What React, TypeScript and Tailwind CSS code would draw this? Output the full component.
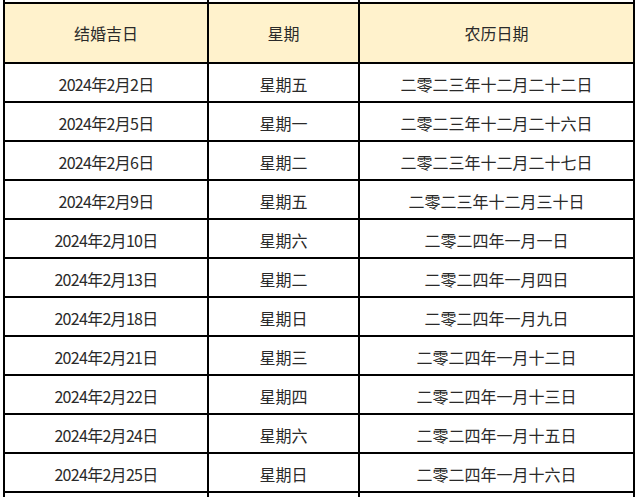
const rows = [
  ["2024年2月2日", "星期五", "二零二三年十二月二十二日"],
  ["2024年2月5日", "星期一", "二零二三年十二月二十六日"],
  ["2024年2月6日", "星期二", "二零二三年十二月二十七日"],
  ["2024年2月9日", "星期五", "二零二三年十二月三十日"],
  ["2024年2月10日", "星期六", "二零二四年一月一日"],
  ["2024年2月13日", "星期二", "二零二四年一月四日"],
  ["2024年2月18日", "星期日", "二零二四年一月九日"],
  ["2024年2月21日", "星期三", "二零二四年一月十二日"],
  ["2024年2月22日", "星期四", "二零二四年一月十三日"],
  ["2024年2月24日", "星期六", "二零二四年一月十五日"],
  ["2024年2月25日", "星期日", "二零二四年一月十六日"],
];

const grid = "grid grid-cols-[204px_151px_275px] border-b-2 border-black";
const cell = "flex items-center justify-center border-r-2 border-black";

export default function App() {
  return (
    <div
      className="h-[497px] w-[640px] overflow-hidden bg-white text-[16px] text-[#2a2a2a]"
      style={{ fontFamily: '"Noto Sans CJK SC", "Noto Sans", sans-serif' }}
    >
      <div className="ml-[3px] w-[632px] border-l-2 border-black">
        {/* row above, cut off */}
        <div className={`${grid} h-[4px]`}>
          <div className={cell} />
          <div className={cell} />
          <div className={cell} />
        </div>

        {/* header */}
        <div className={`${grid} h-[60px] bg-[#fff2cc]`}>
          <div className={cell}>结婚吉日</div>
          <div className={cell}>星期</div>
          <div className={cell}>农历日期</div>
        </div>

        {rows.map((r) => (
          <div key={r[0]} className={`${grid} h-[39px]`}>
            <div className={`${cell} pt-[2px] tracking-[-0.7px]`}>{r[0]}</div>
            <div className={`${cell} pt-[2px]`}>{r[1]}</div>
            <div className={`${cell} pt-[2px]`}>{r[2]}</div>
          </div>
        ))}

        {/* next row, cut off */}
        <div className={`${grid} h-[39px]`}>
          <div className={cell} />
          <div className={cell} />
          <div className={cell} />
        </div>
      </div>
    </div>
  );
}
